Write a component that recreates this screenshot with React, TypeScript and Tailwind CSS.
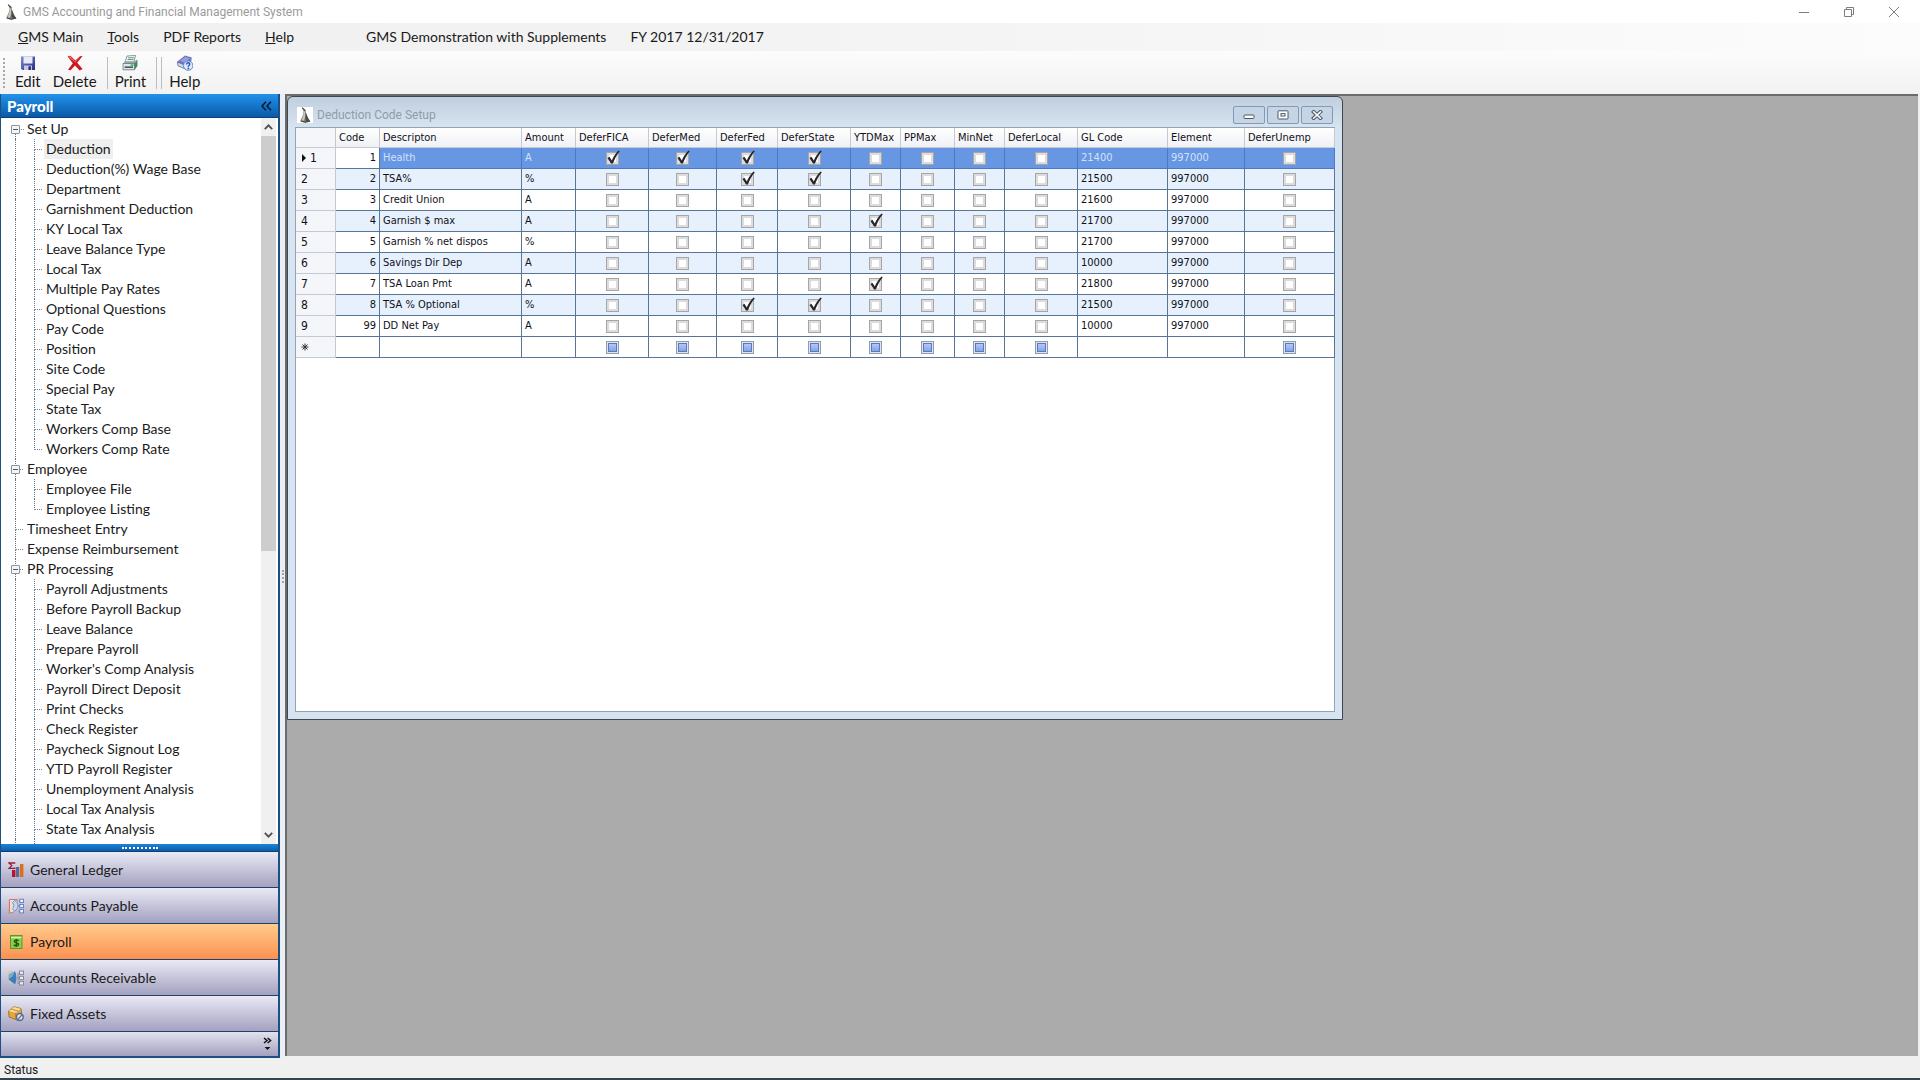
import { useState } from "react";
import type { ReactNode } from "react";

const UI_FONT = "font-['Lato','Open_Sans',sans-serif]";
const SYSTEM_FONT = "font-['Roboto','Open_Sans',sans-serif]";
const GRID_FONT = "font-['DejaVu_Sans_Condensed','Noto_Sans',sans-serif]";

type TreeGroup = { label: string; children?: string[] };

const TREE: TreeGroup[] = [
  {
    label: "Set Up",
    children: [
      "Deduction",
      "Deduction(%) Wage Base",
      "Department",
      "Garnishment Deduction",
      "KY Local Tax",
      "Leave Balance Type",
      "Local Tax",
      "Multiple Pay Rates",
      "Optional Questions",
      "Pay Code",
      "Position",
      "Site Code",
      "Special Pay",
      "State Tax",
      "Workers Comp Base",
      "Workers Comp Rate",
    ],
  },
  { label: "Employee", children: ["Employee File", "Employee Listing"] },
  { label: "Timesheet Entry" },
  { label: "Expense Reimbursement" },
  {
    label: "PR Processing",
    children: [
      "Payroll Adjustments",
      "Before Payroll Backup",
      "Leave Balance",
      "Prepare Payroll",
      "Worker's Comp Analysis",
      "Payroll Direct Deposit",
      "Print Checks",
      "Check Register",
      "Paycheck Signout Log",
      "YTD Payroll Register",
      "Unemployment Analysis",
      "Local Tax Analysis",
      "State Tax Analysis",
      "",
    ],
  },
];

type Column = { name: string; width: string; kind: "text" | "check" };

const COLUMNS: Column[] = [
  { name: "Code", width: "w-[44px]", kind: "text" },
  { name: "Descripton", width: "w-[142px]", kind: "text" },
  { name: "Amount", width: "w-[54px]", kind: "text" },
  { name: "DeferFICA", width: "w-[73px]", kind: "check" },
  { name: "DeferMed", width: "w-[68px]", kind: "check" },
  { name: "DeferFed", width: "w-[61px]", kind: "check" },
  { name: "DeferState", width: "w-[73px]", kind: "check" },
  { name: "YTDMax", width: "w-[50px]", kind: "check" },
  { name: "PPMax", width: "w-[54px]", kind: "check" },
  { name: "MinNet", width: "w-[50px]", kind: "check" },
  { name: "DeferLocal", width: "w-[73px]", kind: "check" },
  { name: "GL Code", width: "w-[90px]", kind: "text" },
  { name: "Element", width: "w-[77px]", kind: "text" },
  { name: "DeferUnemp", width: "w-[90px]", kind: "check" },
];

type Deduction = {
  code: number;
  description: string;
  amount: string;
  gl: string;
  checked: string[];
};

const DEDUCTIONS: Deduction[] = [
  { code: 1, description: "Health", amount: "A", gl: "21400", checked: ["DeferFICA", "DeferMed", "DeferFed", "DeferState"] },
  { code: 2, description: "TSA%", amount: "%", gl: "21500", checked: ["DeferFed", "DeferState"] },
  { code: 3, description: "Credit Union", amount: "A", gl: "21600", checked: [] },
  { code: 4, description: "Garnish $ max", amount: "A", gl: "21700", checked: ["YTDMax"] },
  { code: 5, description: "Garnish % net dispos", amount: "%", gl: "21700", checked: [] },
  { code: 6, description: "Savings Dir Dep", amount: "A", gl: "10000", checked: [] },
  { code: 7, description: "TSA Loan Pmt", amount: "A", gl: "21800", checked: ["YTDMax"] },
  { code: 8, description: "TSA % Optional", amount: "%", gl: "21500", checked: ["DeferFed", "DeferState"] },
  { code: 99, description: "DD Net Pay", amount: "A", gl: "10000", checked: [] },
];

function LogoIcon() {
  return (
    <svg viewBox="0 0 16 16" className="size-4 shrink-0" aria-hidden="true">
      <path d="M5 0.4 L8.4 3 L9 6 L11 11 L13.4 14.4 L9.4 15.6 L5 15 L3.4 13.6 L5.6 9 L6.6 4.4 Z" fill="#85827b" />
      <path d="M6.8 4 L8.2 5 L8.4 9 L7 13.4 L4.6 13.4 L6.2 9 Z" fill="#cdc8be" />
      <path d="M8.6 5 L11 11 L13.4 14.4 L9.4 15.4 L8.4 12 Z" fill="#4b4a47" />
      <path d="M5 0.6 L8.4 3.6 M3.6 14 L9 15.4" stroke="#4b4a47" strokeWidth="1.1" />
    </svg>
  );
}

function SaveIcon() {
  return (
    <svg viewBox="0 0 16 16" className="size-4" aria-hidden="true">
      <defs>
        <linearGradient id="save-body" x1="0" y1="0" x2="1" y2="1">
          <stop offset="0" stopColor="#8289cf" />
          <stop offset="1" stopColor="#262d86" />
        </linearGradient>
      </defs>
      <path d="M1 1.5 H15 V15 H2.5 L1 13.5 Z" fill="url(#save-body)" />
      <rect x="3.5" y="1.5" width="9" height="7" fill="#e6ebf6" />
      <rect x="4" y="10.5" width="8" height="4.5" fill="#c5cbe6" />
      <rect x="8.5" y="11.3" width="2.4" height="3.7" fill="#232a6e" />
    </svg>
  );
}

function DeleteIcon() {
  return (
    <svg viewBox="0 0 16 16" className="size-4" aria-hidden="true">
      <path
        d="M0.6 1.6 L3.4 0.8 L8.3 5.6 L13 1.2 L15.6 1 L10.2 7.8 L15.6 14 L12.6 15.4 L8 10.4 L3.6 15.2 L1 14.8 L5.8 8.2 Z"
        fill="#c9181e"
      />
      <path d="M1.2 1.9 L3.2 1.3 L8 6.6 L13.4 1.6 L8.3 7.6 Z" fill="#ec6a66" />
    </svg>
  );
}

function PrintIcon() {
  return (
    <svg viewBox="0 0 16 16" className="size-4" aria-hidden="true">
      <path d="M5 1 L13.5 0.5 L11.8 7 H3.2 Z" fill="#ffffff" stroke="#6b7784" strokeWidth="0.8" />
      <path d="M6 2.8 H12 M5.5 4.6 H11.4" stroke="#3f8a61" strokeWidth="0.9" />
      <path d="M1 8.5 L3 6.2 H12.4 L15.3 4.6 L15.3 11 L12.6 14.8 H1 Z" fill="#9aa6b0" />
      <path d="M1 8.5 H12.6 V14.8 H1 Z" fill="#dfe7ea" stroke="#5d6a74" strokeWidth="0.7" />
      <rect x="2.6" y="11.4" width="8.4" height="1.6" fill="#4a5661" />
      <rect x="8.6" y="9.4" width="3" height="1.4" fill="#23b04c" />
      <path d="M12.6 8.5 L15.3 5 V11 L12.6 14.8 Z" fill="#3d8b5c" />
    </svg>
  );
}

function HelpIcon() {
  return (
    <svg viewBox="0 0 16 16" className="size-4" aria-hidden="true">
      <path d="M0.4 6.6 L8 0.6 L14.8 2.6 L14 8 L8.6 11.4 L1.4 9.6 Z" fill="#6f79bf" />
      <path d="M0.4 7 L1 10.8 L8.4 14 L8.6 10.4 Z" fill="#d5d9ec" stroke="#5a629f" strokeWidth="0.8" />
      <path d="M3 6 L8.2 1.8 L12.8 3.2 L8.6 7.6 Z" fill="#989fd6" />
      <circle cx="11.2" cy="10.6" r="4.7" fill="#dfe9fb" stroke="#5c86c9" strokeWidth="1" />
      <path d="M9.6 9.4 C9.6 7.2 12.9 7.3 12.8 9.2 C12.7 10.4 11.3 10.3 11.3 11.7" fill="none" stroke="#2456b8" strokeWidth="1.4" />
      <circle cx="11.3" cy="13.4" r="0.9" fill="#2456b8" />
    </svg>
  );
}

function LedgerIcon() {
  return (
    <svg viewBox="0 0 16 16" className="size-4" aria-hidden="true">
      <path d="M6.6 1.8 V1 H1 L3.8 3.6 L1 6.4 H6.8 V5.4" fill="none" stroke="#9c1d33" strokeWidth="1.3" />
      <rect x="4" y="8" width="3.4" height="7" fill="#b0182f" />
      <rect x="8" y="5" width="3.2" height="10" fill="#5d6a94" />
      <rect x="12" y="2" width="3.4" height="13" fill="#dc6f1c" />
    </svg>
  );
}

function PayableIcon() {
  return (
    <svg viewBox="0 0 16 16" className="size-4" aria-hidden="true">
      <path d="M1.5 1.5 H9 V4 M1.5 1.5 V15 L6 13.6" fill="#f6ddd0" stroke="#d2785c" strokeWidth="1.2" />
      <path d="M2 2 H7 C11.4 5 11.2 10.5 7 13 L2 14.4 Z" fill="#f1dcd2" />
      <path d="M6.6 2.4 C11 5 11 10.6 6.6 13.2 L4.6 10.6 C6.4 9 6.4 6.6 4.6 4.6 Z" fill="#c6d9f2" stroke="#6a86bd" strokeWidth="0.9" />
      <path d="M10 8 H12 M10.6 3 H12 M10.6 13.4 H12" stroke="#6179b5" strokeWidth="0.9" fill="none" />
      <g fill="#eef3fc" stroke="#6179b5" strokeWidth="0.9">
        <rect x="11.8" y="1.2" width="3.7" height="3.3" />
        <rect x="11.8" y="6.4" width="3.7" height="3.3" />
        <rect x="11.8" y="11.6" width="3.7" height="3.3" />
      </g>
    </svg>
  );
}

function PayrollIcon() {
  return (
    <svg viewBox="0 0 16 16" className="size-4" aria-hidden="true">
      <rect x="2.5" y="1.5" width="11.5" height="13" fill="#8fca4a" stroke="#5a9a2a" />
      <path d="M3 3.6 H13.6" stroke="#d6f2a6" strokeWidth="1.4" />
      <path
        d="M10.6 6.8 C9.6 5.4 6.2 5.6 6.2 7.3 C6.2 9.2 10.6 8.2 10.6 10.3 C10.6 12 7 12.2 5.8 10.7 M8.4 4.9 V12.9"
        fill="none"
        stroke="#1f5c12"
        strokeWidth="1.4"
      />
    </svg>
  );
}

function ReceivableIcon() {
  return (
    <svg viewBox="0 0 16 16" className="size-4" aria-hidden="true">
      <path d="M0.4 1.6 L5 1 L3 14.6 L0.4 12 Z" fill="#cfc7a8" />
      <path d="M7 1.2 C8.8 4.5 8.8 11 7 14.2 L0.8 9.8 V5 Z" fill="#3c7fb8" />
      <path d="M7 1.2 L4.6 6.4 L0.8 9 V5 Z" fill="#79a9d0" />
      <path d="M8.4 8 H12 M10 3 V13.5 M10 3 H11.5 M10 13.5 H11.5" stroke="#8b8f9d" strokeWidth="0.9" fill="none" />
      <g fill="#e8eaf1" stroke="#858a99" strokeWidth="1">
        <rect x="11.5" y="1" width="4" height="3.4" />
        <rect x="11.5" y="6.3" width="4" height="3.4" />
        <rect x="11.5" y="11.6" width="4" height="3.4" />
      </g>
    </svg>
  );
}

function AssetsIcon() {
  return (
    <svg viewBox="0 0 16 16" className="size-4" aria-hidden="true">
      <path d="M0.6 5 L6 0.8 L13 2.6 L13.6 8 L8 13.6 L1 11 Z" fill="#e3a640" stroke="#946215" strokeWidth="0.8" />
      <path d="M0.8 5 L6 1 L12.8 2.8 L7.6 6.8 Z" fill="#f9dd98" />
      <path d="M7.6 6.8 L8 13.2 M3.4 3.2 L10 5" stroke="#a87420" strokeWidth="0.8" />
      <circle cx="11.8" cy="11" r="3.4" fill="#dbe3f0" stroke="#5b6b8e" strokeWidth="1.5" />
      <path d="M8.8 14.6 L14 8.8" stroke="#5b6b8e" strokeWidth="1.2" />
    </svg>
  );
}

const MODULES: { label: string; icon: ReactNode }[] = [
  { label: "General Ledger", icon: <LedgerIcon /> },
  { label: "Accounts Payable", icon: <PayableIcon /> },
  { label: "Payroll", icon: <PayrollIcon /> },
  { label: "Accounts Receivable", icon: <ReceivableIcon /> },
  { label: "Fixed Assets", icon: <AssetsIcon /> },
];

function TitleBar() {
  const button = "flex h-5 w-[45px] items-center justify-center text-[#7d7d7d]";
  return (
    <header className="flex h-[23px] shrink-0 items-center bg-white pr-1 pl-[3px]">
      <LogoIcon />
      <h1 className={`${SYSTEM_FONT} ml-1 flex-1 text-[12px] leading-4 text-[#9a9a9a]`}>
        GMS Accounting and Financial Management System
      </h1>
      <button type="button" aria-label="Minimize" className={button}>
        <svg viewBox="0 0 10 10" className="size-[10px]"><path d="M0 5.5 H10" stroke="currentColor" /></svg>
      </button>
      <button type="button" aria-label="Restore" className={button}>
        <svg viewBox="0 0 10 10" className="size-[10px]" fill="none" stroke="currentColor">
          <path d="M0.5 2.5 H7.5 V9.5 H0.5 Z M2.5 2.5 V0.5 H9.5 V7.5 H7.5" />
        </svg>
      </button>
      <button type="button" aria-label="Close" className={button}>
        <svg viewBox="0 0 10 10" className="size-[10px]"><path d="M0 0 L10 10 M10 0 L0 10" stroke="currentColor" /></svg>
      </button>
    </header>
  );
}

function MenuBar() {
  return (
    <nav aria-label="Main menu" className="flex h-7 shrink-0 items-center gap-6 bg-linear-to-r from-[#f0f0f0] via-[#f4f4f4] to-[#fcfcfc] pl-[18px] text-[14px] leading-5">
      <button type="button"><u>G</u>MS Main</button>
      <button type="button"><u>T</u>ools</button>
      <button type="button">PDF Reports</button>
      <button type="button"><u>H</u>elp</button>
      <span className="ml-12">GMS Demonstration with Supplements</span>
      <span>FY 2017 12/31/2017</span>
    </nav>
  );
}

function ToolButton({ label, icon }: { label: string; icon: ReactNode }) {
  return (
    <button type="button" className="flex flex-col items-center text-[15px] leading-5">
      {icon}
      {label}
    </button>
  );
}

function ToolBar() {
  return (
    <div role="toolbar" aria-label="Actions" className="flex h-[43px] shrink-0 items-center bg-linear-to-b from-[#fcfcfc] to-[#f2f2f2] pl-[3px]">
      <span className="h-[30px] border-l-2 border-dotted border-[#a8a8a8]" />
      <div className="ml-2.5 flex gap-3">
        <ToolButton label="Edit" icon={<SaveIcon />} />
        <ToolButton label="Delete" icon={<DeleteIcon />} />
      </div>
      <span className="ml-2.5 h-8 border-l border-[#bdbdbd]" />
      <div className="ml-[7px]">
        <ToolButton label="Print" icon={<PrintIcon />} />
      </div>
      <span className="ml-2.5 h-8 w-[6px] border-x border-[#bdbdbd]" />
      <div className="ml-[7px]">
        <ToolButton label="Help" icon={<HelpIcon />} />
      </div>
    </div>
  );
}

function Branch({ up = true, down = true, width }: { up?: boolean; down?: boolean; width: string }) {
  return (
    <span className={`flex h-5 shrink-0 flex-col ${width}`}>
      <span className={`h-[11px] w-2 border-b border-dotted border-b-[#7d8791] ${up ? "border-l border-l-[#5f7488]" : "ml-px"}`} />
      <span className={`h-[9px] ${down ? "border-l border-dotted border-[#5f7488]" : ""}`} />
    </span>
  );
}

function Tree() {
  const [selected, setSelected] = useState("Set Up/Deduction");
  const [closed, setClosed] = useState<string[]>([]);
  const toggle = (label: string) =>
    setClosed((c) => (c.includes(label) ? c.filter((l) => l !== label) : [...c, label]));

  return (
    <ul className="min-w-0 flex-1 overflow-hidden pt-px pl-[14px] text-[14px] leading-5">
      {TREE.map((group, g) => (
        <li key={group.label}>
          <div className="relative flex h-5">
            <Branch up={g > 0} width="w-[11px]" />
            {group.children && (
              <button
                type="button"
                aria-label={`Toggle ${group.label}`}
                aria-expanded={!closed.includes(group.label)}
                onClick={() => toggle(group.label)}
                className="absolute top-1.5 -left-1 flex size-[9px] items-center justify-center rounded-[1px] border border-[#8b929a] bg-[#f5f5f5]"
              >
                <span className="h-px w-[5px] bg-[#3d5a80]" />
              </button>
            )}
            <button type="button" className="px-px whitespace-nowrap">{group.label}</button>
          </div>
          {group.children && !closed.includes(group.label) && (
            <ul>
              {group.children.map((child, i) => {
                const id = `${group.label}/${child}`;
                const open = child === "" || i < group.children!.length - 1;
                return (
                  <li key={id} className="flex h-5">
                    <span className="w-[19px] shrink-0 border-l border-dotted border-[#5f7488]" />
                    <Branch down={open} width="w-[10px]" />
                    {child && (
                      <button
                        type="button"
                        onClick={() => setSelected(id)}
                        className={selected === id ? "bg-[#efefef] px-0.5 whitespace-nowrap" : "px-0.5 whitespace-nowrap"}
                      >
                        {child}
                      </button>
                    )}
                  </li>
                );
              })}
            </ul>
          )}
        </li>
      ))}
    </ul>
  );
}

function Sidebar() {
  const [active, setActive] = useState("Payroll");
  return (
    <aside className="flex w-[280px] shrink-0 flex-col border-r-2 border-b-2 border-l border-[#1d4f80]">
      <div className="flex h-6 shrink-0 items-center justify-between border-b border-[#0d3f75] bg-linear-to-b from-[#2292ea] to-[#0a5aa8] px-1.5">
        <h2 className="text-[15px] leading-5 font-black text-white">Payroll</h2>
        <button type="button" aria-label="Collapse panel">
          <svg viewBox="0 0 11 10" className="h-[10px] w-[11px]" fill="none" stroke="#06162c" strokeWidth="1.5">
            <path d="M5 0.8 L1 5 L5 9.2 M10 0.8 L6 5 L10 9.2" />
          </svg>
        </button>
      </div>
      <div className="flex min-h-0 flex-1 bg-white">
        <Tree />
        <div className="mr-0.5 flex w-[15px] flex-col bg-[#f0f0f0]">
          <button type="button" aria-label="Scroll up" className="flex h-[18px] items-center justify-center">
            <svg viewBox="0 0 9 6" className="h-[6px] w-[9px]" fill="none" stroke="#505050" strokeWidth="1.8"><path d="M0.8 5.2 L4.5 1.3 L8.2 5.2" /></svg>
          </button>
          <span className="h-[415px] bg-[#cdcdcd]" />
          <button type="button" aria-label="Scroll down" className="mt-auto flex h-[18px] items-center justify-center">
            <svg viewBox="0 0 9 6" className="h-[6px] w-[9px]" fill="none" stroke="#505050" strokeWidth="1.8"><path d="M0.8 0.8 L4.5 4.7 L8.2 0.8" /></svg>
          </button>
        </div>
      </div>
      <div className="flex h-2 shrink-0 items-center justify-center border-b border-[#0d3f75] bg-linear-to-b from-[#1c84d8] to-[#0c5ca8]">
        <span className="w-[36px] border-t-2 border-dotted border-white" />
      </div>
      <nav aria-label="Modules" className="shrink-0">
        {MODULES.map((m) => (
          <button
            key={m.label}
            type="button"
            onClick={() => setActive(m.label)}
            className={`flex h-9 w-full items-center gap-1.5 border-b border-[#1d4466] pl-[7px] text-[14px] leading-5 ${
              active === m.label
                ? "bg-linear-to-b from-[#ffcb8c] to-[#fb9050]"
                : "bg-linear-to-b from-[#eaeaf5] to-[#a3a1c0]"
            }`}
          >
            {m.icon}
            {m.label}
          </button>
        ))}
      </nav>
      <div className="flex h-6 shrink-0 items-center justify-end bg-linear-to-b from-[#e2e2ef] to-[#a3a1c0] pr-1.5">
        <button type="button" aria-label="More modules">
          <svg viewBox="0 0 9 14" className="h-[14px] w-[9px]">
            <path d="M1 1 L4 3.5 L1 6 M4.6 1 L7.6 3.5 L4.6 6" fill="none" stroke="#111" strokeWidth="1.5" />
            <path d="M1.6 10 H7.4 L4.5 13 Z" fill="#111" />
          </svg>
        </button>
      </div>
    </aside>
  );
}

function CheckCell({ label, initial }: { label: string; initial: boolean }) {
  const [on, setOn] = useState(initial);
  return (
    <span className="relative mx-auto block size-[13px]">
      <input
        type="checkbox"
        aria-label={label}
        checked={on}
        onChange={() => setOn(!on)}
        className="block size-[13px] appearance-none border border-[#a6a6a6] bg-white shadow-[inset_0_0_0_2px_#dcdcdf]"
      />
      {on && (
        <svg viewBox="0 0 15 15" className="pointer-events-none absolute -top-0.5 left-0 size-[15px]" aria-hidden="true">
          <path d="M1.5 8 L3.4 6.8 L5.8 10.6 C7.6 6.6 9.8 3.2 12.6 0.6 L13.8 1.2 C10.8 4.8 8.6 9 6.9 13.6 H5 Z" fill="#25252b" />
        </svg>
      )}
    </span>
  );
}

function NewRowCheck({ label }: { label: string }) {
  return (
    <input
      type="checkbox"
      aria-label={label}
      className="mx-auto block size-[13px] appearance-none border border-[#8f9cb5] bg-linear-to-b from-[#c3d4f6] to-[#7599e2] shadow-[inset_0_0_0_1px_#dfe4ee,inset_0_0_0_2px_#5a7abf]"
    />
  );
}

function DeductionGrid() {
  const stub = "border-r border-b border-[#c3cad6] bg-[#f5f6f9] px-[5px] text-left text-[12px] font-normal";
  return (
    <table className={`${GRID_FONT} w-full table-fixed border-separate border-spacing-0 text-[11px] leading-4 text-[#101018]`}>
      <thead>
        <tr className="h-5">
          <th scope="col" aria-label="Row" className="w-[40px] border-r border-b border-[#c3cad6] bg-[#f5f6f9]" />
          {COLUMNS.map((c) => (
            <th
              key={c.name}
              scope="col"
              className={`${c.width} border-r border-b border-[#c3cad6] bg-linear-to-b from-white to-[#f0f1f5] p-0 pl-[3px] text-left font-normal whitespace-nowrap`}
            >
              {c.name}
            </th>
          ))}
        </tr>
      </thead>
      <tbody>
        {DEDUCTIONS.map((d, i) => {
          const current = i === 0;
          const tone = current
            ? "border-[#4c78c6] bg-[#6796e2] text-[#d3e2fb]"
            : i % 2 === 1
              ? "border-[#587596] bg-[#e6f1fd]"
              : "border-[#587596] bg-white";
          const values: Record<string, string> = {
            Descripton: d.description,
            Amount: d.amount,
            "GL Code": d.gl,
            Element: "997000",
          };
          return (
            <tr key={d.code} className="h-[21px]">
              <th scope="row" className={stub}>
                <span className="flex items-center gap-1">
                  {current && (
                    <svg viewBox="0 0 4 8" className="ml-px h-2 w-1" aria-hidden="true"><path d="M0 0 L4 4 L0 8 Z" fill="#111" /></svg>
                  )}
                  {i + 1}
                </span>
              </th>
              {COLUMNS.map((c) => {
                if (c.name === "Code") {
                  return (
                    <td key={c.name} className={`border-r border-b border-[#587596] p-0 pr-[3px] text-right ${i % 2 === 1 ? "bg-[#e6f1fd]" : "bg-white"}`}>
                      {d.code}
                    </td>
                  );
                }
                return c.kind === "check" ? (
                  <td key={c.name} className={`border-r border-b p-0 ${tone}`}>
                    <CheckCell label={`${d.description} ${c.name}`} initial={d.checked.includes(c.name)} />
                  </td>
                ) : (
                  <td key={c.name} className={`border-r border-b p-0 pl-[3px] whitespace-nowrap ${tone}`}>
                    {values[c.name]}
                  </td>
                );
              })}
            </tr>
          );
        })}
        <tr className="h-[21px]">
          <th scope="row" aria-label="New row" className={stub}>
            <svg viewBox="0 0 8 8" className="size-2" stroke="#333" strokeWidth="1" aria-hidden="true">
              <path d="M4 0.5 V7.5 M0.5 4 H7.5 M1.5 1.5 L6.5 6.5 M6.5 1.5 L1.5 6.5" />
            </svg>
          </th>
          {COLUMNS.map((c) => (
            <td key={c.name} className="border-r border-b border-[#587596] bg-white p-0">
              {c.kind === "check" && <NewRowCheck label={`New row ${c.name}`} />}
            </td>
          ))}
        </tr>
      </tbody>
    </table>
  );
}

function DeductionWindow() {
  const button = "flex h-[18px] w-8 items-center justify-center rounded-[2px] border border-[#8699b2] bg-[#c6d5e5]";
  return (
    <section
      aria-label="Deduction Code Setup"
      className="absolute top-0 left-0 flex h-[624px] w-[1056px] flex-col rounded-t-md border border-[#3f4650] bg-linear-to-b from-[#c0cfdf] via-[#d7e4f1] via-5% to-[#d7e4f1] px-[7px] pb-[7px]"
    >
      <div className="flex h-[30px] shrink-0 items-center gap-1 pt-1.5 pr-0.5 pl-[2px]">
        <span className="bg-white"><LogoIcon /></span>
        <h2 className={`${SYSTEM_FONT} flex-1 text-[12px] leading-4 text-[#8f9ba8]`}>Deduction Code Setup</h2>
        <div className="flex gap-0.5">
          <button type="button" aria-label="Minimize window" className={button}>
            <svg viewBox="0 0 12 10" className="h-[10px] w-3"><rect x="1" y="5" width="10" height="3.5" rx="0.8" fill="#fff" stroke="#4a5666" /></svg>
          </button>
          <button type="button" aria-label="Maximize window" className={button}>
            <svg viewBox="0 0 12 10" className="h-[10px] w-3" fill="#fff" stroke="#4a5666">
              <rect x="1" y="0.8" width="10" height="8.2" rx="0.6" />
              <rect x="4" y="3.6" width="4" height="2.4" />
            </svg>
          </button>
          <button type="button" aria-label="Close window" className={button}>
            <svg viewBox="0 0 12 10" className="h-[10px] w-3" strokeLinecap="square">
              <path d="M2.6 1.8 L9.4 8.2 M9.4 1.8 L2.6 8.2" stroke="#4a5666" strokeWidth="3.6" />
              <path d="M2.6 1.8 L9.4 8.2 M9.4 1.8 L2.6 8.2" stroke="#fff" strokeWidth="1.6" />
            </svg>
          </button>
        </div>
      </div>
      <div className="min-h-0 flex-1 border border-[#94a2b4] bg-white">
        <DeductionGrid />
      </div>
    </section>
  );
}

export default function App() {
  return (
    <div className={`${UI_FONT} flex h-screen flex-col overflow-hidden bg-[#f0f0f0] text-[#1a1a1a]`}>
      <TitleBar />
      <MenuBar />
      <ToolBar />
      <div className="flex min-h-0 flex-1">
        <Sidebar />
        <div className="flex w-[5px] shrink-0 items-center justify-center bg-[#e9eff7]">
          <span className="h-[13px] border-l-2 border-dotted border-[#9aa5b3]" />
        </div>
        <main className="relative mr-0.5 mb-0.5 min-w-0 flex-1 border-t-2 border-l-2 border-[#6c6c6c] bg-[#ababab]">
          <DeductionWindow />
        </main>
      </div>
      <footer className={`${SYSTEM_FONT} flex h-[22px] shrink-0 items-center border-b-2 border-[#33444c] pt-1 pl-1 text-[12px] leading-4`}>
        Status
      </footer>
    </div>
  );
}
